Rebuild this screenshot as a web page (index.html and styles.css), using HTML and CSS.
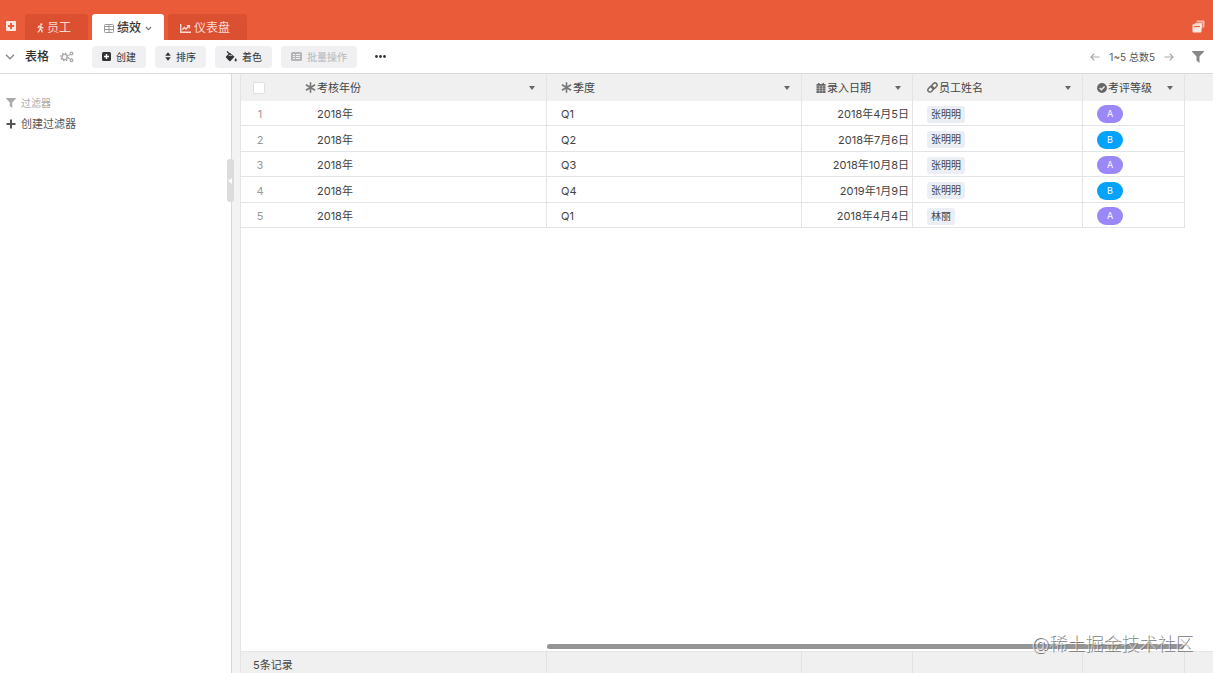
FILE: index.html
```html
<!DOCTYPE html>
<html lang="zh-CN">
<head>
    <meta charset="UTF-8">
    <meta name="viewport" content="width=device-width, initial-scale=1.0">
    <title>绩效</title>
    <link rel="stylesheet" href="styles.css">
</head>
<body>
    <header class="topbar">
        <button class="icon-btn add-tab" aria-label="添加">
            <svg width="10" height="10" viewBox="0 0 10 10"><rect width="10" height="10" rx="1" fill="#fff"/><path d="M5 2v6M2 5h6" stroke="#ea5b3a" stroke-width="2"/></svg>
        </button>
        <nav class="tabs">
            <a class="tab" href="#">
                <svg width="7" height="10" viewBox="0 0 8 11" fill="none" stroke="currentColor" stroke-width="1.6"><circle cx="4.9" cy="1.3" r="1.3" fill="currentColor" stroke="none"/><path d="M1 5.400l1.200-1.700 2-.5.9 1.600 2.200.9M4.300 3.400L3.600 6.400l1.800 1.500.5 2.700M3.500 6.500L2.700 8.600 1 10.500"/></svg>
                员工
            </a>
            <a class="tab active" href="#">
                <svg width="10" height="9" viewBox="0 0 10 9" fill="none" stroke="#999"><rect x=".5" y=".5" width="9" height="8" rx="1"/><path d="M0 2.500h10M0 5.500h10M5 1v8"/></svg>
                绩效
                <svg class="chev" width="7" height="5" viewBox="0 0 8 5" fill="none" stroke="#777" stroke-width="1.400"><path d="M1 .8l3 3 3-3"/></svg>
            </a>
            <a class="tab" href="#">
                <svg width="11" height="9" viewBox="0 0 11 9" fill="none" stroke="currentColor" stroke-width="1.400"><path d="M.700 0v8.200H11"/><path d="M2.300 5.700l2-2.200 1.600 1.600L9 2M6.800 1.600h2.600v2.600"/></svg>
                仪表盘
            </a>
        </nav>
        <button class="icon-btn windows" aria-label="窗口">
            <svg width="13" height="13" viewBox="0 0 13 13"><path d="M4.500 2V1.500c0-.6.400-1 1-1h6c.6 0 1 .4 1 1v5.300c0 .6-.4 1-1 1" fill="#f7bcae"/><path d="M2.600 4V3.400c0-.6.400-1 1-1h6c.6 0 1 .4 1 1V9" fill="#fad0c6" stroke="#ea5b3a" stroke-width=".6"/><rect x=".5" y="4.300" width="9" height="8.200" rx="1" fill="#fde9e4"/><path d="M2 6.500h6" stroke="#ea5b3a" stroke-width="1.200"/></svg>
        </button>
    </header>

    <div class="toolbar">
        <button class="icon-btn fold" aria-label="折叠">
            <svg width="10" height="6" viewBox="0 0 10 6" fill="none" stroke="#888" stroke-width="1.300"><path d="M1 .8l4 4 4-4"/></svg>
        </button>
        <span class="view-name">表格</span>
        <button class="icon-btn settings" aria-label="设置">
            <svg width="14" height="12" viewBox="0 0 14 12" fill="none" stroke="#aaa"><circle cx="4.600" cy="6" r="2.600" stroke-width="1.400"/><circle cx="4.600" cy="6" r="3.800" stroke-width="1.400" stroke-dasharray="1.500 1.480"/><circle cx="11.500" cy="2.500" r="1.300" stroke-width="1.300"/><circle cx="11.500" cy="9.300" r="1.300" stroke-width="1.300"/><path d="M9 4h1M9 7.500h1"/></svg>
        </button>
        <button class="btn">
            <svg width="9" height="9" viewBox="0 0 9 9"><rect width="9" height="9" rx="1.500" fill="#333"/><path d="M4.500 2v5M2 4.500h5" stroke="#fff" stroke-width="1.400"/></svg>
            创建
        </button>
        <button class="btn">
            <svg width="6" height="9" viewBox="0 0 6 9" fill="#333"><path d="M3 .3L5.800 3.800H.2zM3 8.700L.2 5.200h5.600z"/></svg>
            排序
        </button>
        <button class="btn">
            <svg width="12" height="11" viewBox="0 0 12 11"><path d="M1.200 5.200L4.800 1.700l4.700 4.100-4 4.200a.9.900 0 0 1-1.200 0L1.200 6.700a1 1 0 0 1 0-1.500z" fill="#333"/><path d="M3.300 4.800l1.900-1.800 2.300 1.800z" fill="#f0f0f3"/><path d="M2 .5l3.700 3.600" stroke="#333" stroke-width="1.200"/><path d="M10.700 6.900c.7 1 1.100 1.700 1.100 2.400a1.100 1.100 0 0 1-2.200 0c0-.7.400-1.400 1.100-2.400z" fill="#333"/></svg>
            着色
        </button>
        <button class="btn" disabled>
            <svg width="11" height="9" viewBox="0 0 11 9"><rect width="11" height="9" rx="1.500" fill="#b5b5b9"/><path d="M2 2.500h2M2 4.500h2M2 6.500h2M5 2.500h4M5 4.500h4M5 6.500h4" stroke="#f0f0f3"/></svg>
            批量操作
        </button>
        <button class="icon-btn more" aria-label="更多">
            <svg width="11" height="3" viewBox="0 0 11 3" fill="#333"><circle cx="1.500" cy="1.500" r="1.400"/><circle cx="5.500" cy="1.500" r="1.400"/><circle cx="9.500" cy="1.500" r="1.400"/></svg>
        </button>
        <div class="pager">
            <button class="icon-btn" aria-label="上一页">
                <svg width="10" height="8" viewBox="0 0 10 8" fill="none" stroke="#aaa" stroke-width="1.200"><path d="M9.500 4H1M4.300.6L1 4l3.300 3.400"/></svg>
            </button>
            <span>1~5 总数5</span>
            <button class="icon-btn" aria-label="下一页">
                <svg width="10" height="8" viewBox="0 0 10 8" fill="none" stroke="#aaa" stroke-width="1.200"><path d="M.5 4H9M5.700.6L9 4 5.700 7.400"/></svg>
            </button>
        </div>
        <button class="icon-btn filter" aria-label="过滤">
            <svg width="12" height="12" viewBox="0 0 12 12" fill="#888"><path d="M.4 0h11.200c.4 0 .5.400.3.700L7.500 5.400V12L4.500 9.500V5.400L.1.700C-.1.400 0 0 .4 0z"/></svg>
        </button>
    </div>

    <main class="content">
        <aside class="sidebar">
            <div class="side-title">
                <svg width="10" height="10" viewBox="0 0 12 12" fill="#aaa"><path d="M.4 0h11.200c.4 0 .5.400.3.700L7.500 5.400V12L4.500 9.500V5.400L.1.700C-.1.400 0 0 .4 0z"/></svg>
                过滤器
            </div>
            <button class="new-filter">
                <svg width="10" height="10" viewBox="0 0 10 10" stroke="#555" stroke-width="2"><path d="M5 .5v9M.5 5h9"/></svg>
                创建过滤器
            </button>
        </aside>
        <div class="splitter">
            <button class="handle" aria-label="收起"></button>
        </div>
        <section class="grid">
            <table>
                <colgroup>
                    <col class="c-num"><col class="c-year"><col class="c-quarter"><col class="c-date"><col class="c-name"><col class="c-level"><col>
                </colgroup>
                <thead>
                    <tr>
                        <th class="num"><input type="checkbox" aria-label="全选"></th>
                        <th class="year"><div class="head">
                            <svg width="11" height="11" viewBox="0 0 11 11" stroke="#777" stroke-width="1.600"><path d="M5.500.2v10.600M.9 2.800l9.200 5.400M10.100 2.800L.9 8.200"/></svg>
                            <span>考核年份</span><button class="caret" aria-label="考核年份菜单"></button></div></th>
                        <th><div class="head">
                            <svg width="11" height="11" viewBox="0 0 11 11" stroke="#777" stroke-width="1.600"><path d="M5.500.2v10.600M.9 2.800l9.200 5.400M10.100 2.800L.9 8.200"/></svg>
                            <span>季度</span><button class="caret" aria-label="季度菜单"></button></div></th>
                        <th><div class="head">
                            <svg width="10" height="10" viewBox="0 0 10 10"><path d="M2 0h1.500v1h3V0H8v1h1.500v9H.5V1H2z" fill="#666"/><path d="M0 3h10M0 5.300h10M0 7.600h10M3.500 3v7M6.500 3v7" stroke="#f0f0f0" stroke-width=".4"/></svg>
                            <span>录入日期</span><button class="caret" aria-label="录入日期菜单"></button></div></th>
                        <th><div class="head">
                            <svg width="11" height="11" viewBox="0 0 11 11" fill="none" stroke="#666" stroke-width="1.400"><rect x="4.200" y="1.700" width="6.200" height="4.200" rx="2.100" transform="rotate(-45 7.300 3.800)"/><rect x=".6" y="5.100" width="6.200" height="4.200" rx="2.100" transform="rotate(-45 3.700 7.200)"/></svg>
                            <span>员工姓名</span><button class="caret" aria-label="员工姓名菜单"></button></div></th>
                        <th><div class="head">
                            <svg width="10" height="10" viewBox="0 0 11 11"><circle cx="5.500" cy="5.500" r="5.400" fill="#666"/><path d="M2.900 5.600l1.900 1.900 3.500-3.700" fill="none" stroke="#f0f0f0" stroke-width="1.500"/></svg>
                            <span>考评等级</span><button class="caret" aria-label="考评等级菜单"></button></div></th>
                        <th></th>
                    </tr>
                </thead>
                <tbody>
                    <tr><td class="num">1</td><td class="year">2018年</td><td>Q1</td><td class="date">2018年4月5日</td><td><span class="tag">张明明</span></td><td><span class="level a">A</span></td><td></td></tr>
                    <tr><td class="num">2</td><td class="year">2018年</td><td>Q2</td><td class="date">2018年7月6日</td><td><span class="tag">张明明</span></td><td><span class="level b">B</span></td><td></td></tr>
                    <tr><td class="num">3</td><td class="year">2018年</td><td>Q3</td><td class="date">2018年10月8日</td><td><span class="tag">张明明</span></td><td><span class="level a">A</span></td><td></td></tr>
                    <tr><td class="num">4</td><td class="year">2018年</td><td>Q4</td><td class="date">2019年1月9日</td><td><span class="tag">张明明</span></td><td><span class="level b">B</span></td><td></td></tr>
                    <tr><td class="num">5</td><td class="year">2018年</td><td>Q1</td><td class="date">2018年4月4日</td><td><span class="tag">林丽</span></td><td><span class="level a">A</span></td><td></td></tr>
                </tbody>
            </table>
            <div class="scroll"><div class="thumb"></div></div>
            <footer class="summary">
                <div>5条记录</div><div></div><div></div><div></div><div></div><div></div>
            </footer>
        </section>
    </main>
    <div class="watermark">@稀土掘金技术社区</div>
</body>
</html>
```
FILE: styles.css
```css
* {
    box-sizing: border-box;
}

body {
    margin: 0;
    height: 100vh;
    display: flex;
    flex-direction: column;
    position: relative;
    overflow: hidden;
    font-family: Inter, "Noto Sans CJK SC", sans-serif;
    font-size: 11px;
    line-height: 16px;
    color: #444;
    background: #fff;
}

svg {
    display: block;
    flex: none;
}

button {
    font: inherit;
    color: inherit;
    border: none;
    background: none;
    padding: 0;
    cursor: pointer;
}

/* top bar */
.topbar {
    display: flex;
    align-items: flex-end;
    height: 40px;
    flex: none;
    padding: 0 8px 0 6px;
    background: #ea5b3a;
}

.add-tab {
    margin-bottom: 9px;
    opacity: 0.85;
}

.windows {
    margin: 0 0 7px auto;
}

.tabs {
    display: flex;
    gap: 4px;
    margin-left: 9px;
}

.tab {
    display: flex;
    align-items: center;
    gap: 3px;
    height: 26px;
    padding: 2px 17px 0 12px;
    border-radius: 3px 3px 0 0;
    font-size: 12px;
    color: #fbd9d1;
    background: #dc5032;
    text-decoration: none;
}

.tab.active {
    padding-right: 12px;
    color: #333;
    background: #fff;
    font-weight: 500;
}

.chev {
    margin-left: 1px;
}

/* toolbar */
.toolbar {
    display: flex;
    align-items: center;
    height: 34px;
    flex: none;
    padding: 0 9px 0 5px;
    border-bottom: 1px solid #d9d9d9;
}

.view-name {
    margin: 0 11px 0 10px;
    font-size: 12px;
    font-weight: 500;
    color: #333;
}

.settings {
    margin-right: 9px;
}

.btn {
    display: flex;
    align-items: center;
    gap: 5px;
    height: 22px;
    margin-left: 9px;
    padding: 0 10px;
    border-radius: 4px;
    background: #f0f0f3;
    color: #333;
    font-size: 10px;
}

.btn:disabled {
    color: #b5b5b9;
    cursor: default;
}

.more {
    margin-left: 18px;
}

.pager {
    display: flex;
    align-items: center;
    gap: 9px;
    margin-left: auto;
    font-size: 10px;
    color: #555;
}

.filter {
    margin-left: 18px;
}

/* sidebar */
.content {
    display: flex;
    flex: 1;
    min-height: 0;
}

.sidebar {
    width: 232px;
    flex: none;
    padding: 21px 6px;
    border-right: 1px solid #d9d9d9;
}

.side-title,
.new-filter {
    display: flex;
    align-items: center;
    gap: 5px;
}

.side-title {
    color: #aaa;
    font-size: 10px;
    margin-bottom: 5px;
}

.new-filter {
    color: #555;
}

.splitter {
    position: relative;
    width: 9px;
    flex: none;
    background: #f3f3f3;
    border-right: 1px solid #e4e4e4;
}

.handle {
    position: absolute;
    top: 85px;
    left: -5px;
    width: 7px;
    height: 43px;
    border-radius: 3px;
    background: #dcdcdc;
}

.handle::before {
    content: "";
    display: block;
    width: 0;
    margin-left: 1px;
    border: 3px solid transparent;
    border-left: none;
    border-right: 4px solid #fff;
}

/* data grid */
.grid {
    display: flex;
    flex-direction: column;
    flex: 1;
    min-width: 0;
}

table {
    width: 100%;
    table-layout: fixed;
    border-collapse: separate;
    border-spacing: 0;
}

.c-num { width: 38px; }
.c-year { width: 268px; }
.c-quarter { width: 255px; }
.c-date { width: 111px; }
.c-name { width: 170px; }
.c-level { width: 102px; }

th,
td {
    padding: 0 0 0 14px;
    text-align: left;
    border-right: 1px solid #e2e5e6;
}

th {
    height: 27px;
    background: #f0f0f0;
    font-weight: 400;
}

td {
    height: 25px;
    padding-top: 2px;
    border-bottom: 1px solid #e2e5e6;
}

tr:nth-child(even) td {
    height: 26px;
}

th:last-child,
td:last-child {
    border: none;
}

th.num,
td.num {
    padding-left: 0;
    border-right: none;
    text-align: center;
}

td.num {
    color: #999;
}

th.year {
    padding-left: 26px;
}

td.year {
    padding-left: 38px;
}

td.date {
    padding-left: 0;
    padding-right: 3px;
    text-align: right;
}

.num input {
    appearance: none;
    display: block;
    width: 12px;
    height: 12px;
    margin: 0 auto 0 12px;
    border: 1px solid #e0e0e0;
    border-radius: 2px;
    background: #fff;
}

.head {
    display: flex;
    align-items: center;
    gap: 1px;
    padding-right: 11px;
}

.caret {
    width: 6px;
    margin-left: auto;
    border: solid transparent;
    border-width: 4px 3px 0;
    border-top-color: #666;
}

.tag {
    display: block;
    width: fit-content;
    height: 17px;
    padding: 0 4px;
    border-radius: 3px;
    background: #eceef5;
    font-size: 10px;
    line-height: 17px;
}

.level {
    display: block;
    width: 26px;
    height: 18px;
    border-radius: 9px;
    color: #fff;
    font-size: 9px;
    line-height: 18px;
    text-align: center;
}

.level.a {
    background: #9b87f8;
}

.level.b {
    background: #04a3fb;
}

.scroll {
    margin: auto 29px 2px 306px;
}

.thumb {
    height: 5px;
    border-radius: 3px;
    background: #949494;
}

.summary {
    display: grid;
    grid-template-columns: 306px 255px 111px 170px 102px 1fr;
    height: 22px;
    flex: none;
    background: #f0f0f0;
    border-top: 1px solid #e6e6e6;
}

.summary div {
    padding: 5px 12px 0;
    border-right: 1px solid #e2e2e2;
}

.summary div:last-child {
    border: none;
}

.watermark {
    position: absolute;
    right: 20px;
    bottom: 16px;
    font-size: 18px;
    font-weight: 300;
    line-height: 26px;
    color: rgba(255, 255, 255, 0.6);
    text-shadow: 1px 1px 0 #777;
}
```
